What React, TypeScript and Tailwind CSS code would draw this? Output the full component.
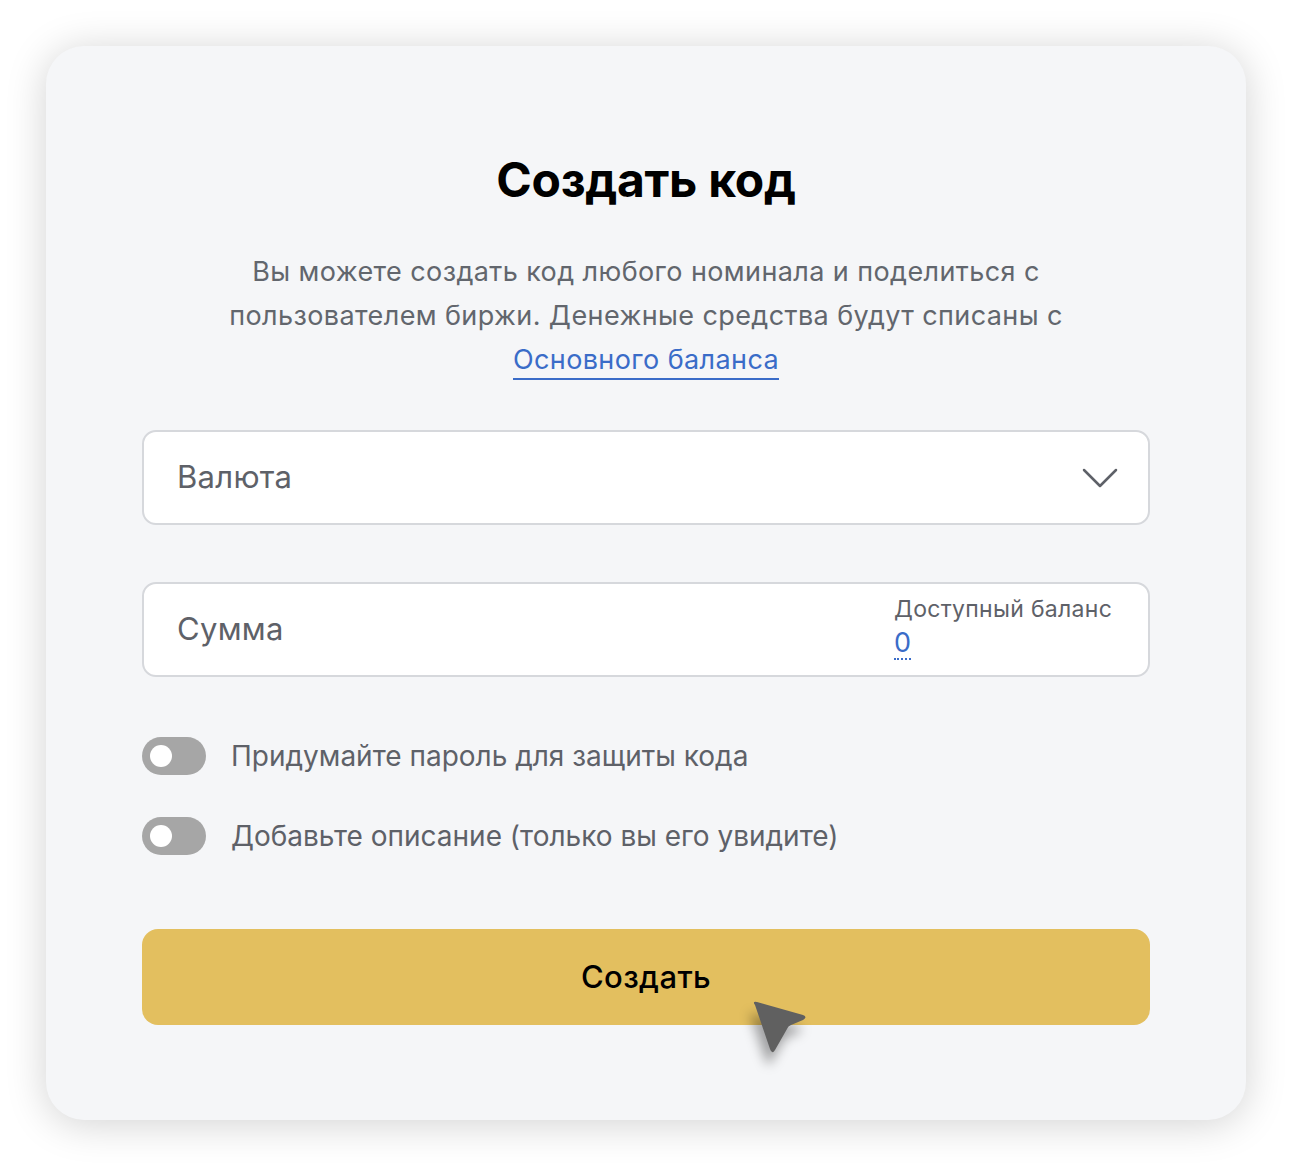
import React from "react";

function Toggle() {
  return (
    <div className="w-[64px] h-[38px] rounded-full bg-[#a6a6a6] flex items-center pl-[8px] shrink-0">
      <div className="w-[22px] h-[22px] rounded-full bg-white" />
    </div>
  );
}

export default function App() {
  return (
    <div className="w-[1292px] h-[1166px] bg-white pt-[46px] pl-[46px]" style={{ fontFamily: "Inter, 'Noto Sans', sans-serif" }}>
      <div className="relative w-[1200px] h-[1074px] rounded-[38px] bg-[#f5f6f8] shadow-[0_4px_40px_rgba(0,0,0,0.18)] px-[96px] pt-[106px]">
        <h1 className="text-center text-[48px] leading-[56px] font-bold text-black tracking-[-0.3px]">Создать код</h1>
        <p className="mt-[42px] text-center text-[27px] leading-[44px] text-[#62666d] tracking-[0.4px] px-[40px]">
          Вы можете создать код любого номинала и поделиться с пользователем биржи. Денежные средства будут списаны с{" "}
          <span className="text-[#3a6cc8] border-b-2 border-[#3a6cc8] pb-[2px]">Основного баланса</span>
        </p>
        <div className="mt-[48px] h-[95px] rounded-[14px] border-2 border-[#d6d8dc] bg-white flex items-center justify-between pl-[33px] pr-[30px]">
          <span className="text-[31px] text-[#5e6168] tracking-[0.3px]">Валюта</span>
          <svg width="36" height="22" viewBox="0 0 36 22" fill="none">
            <path d="M2 3 L18 19 L34 3" stroke="#5e6168" strokeWidth="2.5" strokeLinecap="round" strokeLinejoin="round" />
          </svg>
        </div>
        <div className="mt-[57px] h-[95px] rounded-[14px] border-2 border-[#d6d8dc] bg-white flex items-center justify-between pl-[33px] pr-[32px]">
          <span className="text-[31px] text-[#5e6168] tracking-[0.3px]">Сумма</span>
          <div className="self-stretch flex flex-col items-start w-[222px] pt-[10px]">
            <span className="text-[23px] leading-[30px] text-[#5e6168] tracking-[0.3px]">Доступный баланс</span>
            <span className="mt-[4px] text-[27px] leading-[30px] text-[#3a6cc8] border-b-2 border-dotted border-[#3a6cc8]">0</span>
          </div>
        </div>
        <div className="mt-[58px] flex items-center gap-[25px]">
          <Toggle />
          <span className="text-[28px] text-[#5e6168]">Придумайте пароль для защиты кода</span>
        </div>
        <div className="mt-[38px] flex items-center gap-[25px]">
          <Toggle />
          <span className="text-[28px] text-[#5e6168]">Добавьте описание (только вы его увидите)</span>
        </div>
        <button className="mt-[72px] w-full h-[96px] rounded-[16px] bg-[#e3bf5f] flex items-center justify-center text-[31px] font-medium text-black tracking-[0.4px]">
          Создать
        </button>
        <svg className="absolute left-[700px] top-[950px]" width="80" height="80" viewBox="0 0 80 80" style={{ filter: "drop-shadow(-4px 12px 6px rgba(0,0,0,0.35))" }}>
          <path d="M9 9 Q6 5 11 6 L57 19 Q62 21 57 24 L45 29 Q42 30 41 33 L29 54 Q26 59 24 53 Z" fill="#606060" />
        </svg>
      </div>
    </div>
  );
}
